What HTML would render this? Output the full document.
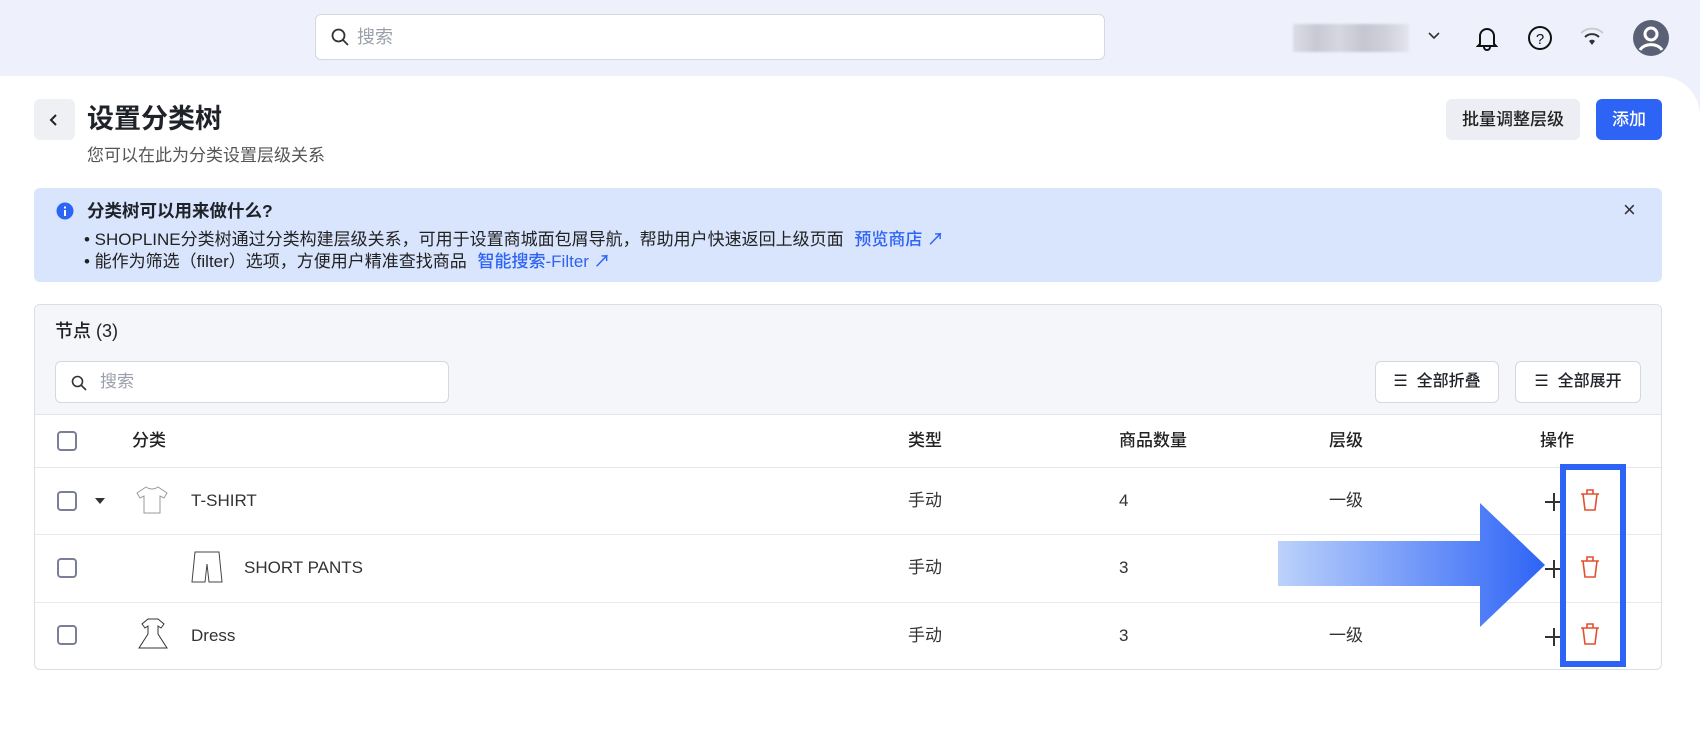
<!DOCTYPE html>
<html><head><meta charset="utf-8"><style>
*{box-sizing:border-box;margin:0;padding:0}
body{width:1700px;height:722px;background:#eef0fb;font-family:"Liberation Sans","Noto Sans CJK SC",sans-serif;color:#1f2329;position:relative;overflow:hidden}
.abs{position:absolute}
.main{position:absolute;left:0;top:76px;width:1700px;height:660px;background:#fff;border-top-right-radius:40px}
.btn{position:absolute;border-radius:6px;font-size:17px;display:flex;align-items:center;justify-content:center;font-weight:500;line-height:20px}
.cb{position:absolute;width:20px;height:20px;border:2px solid #7b7f95;border-radius:4px;left:56px}
.t{position:absolute;font-size:17px;color:#333;line-height:20px;height:20px;white-space:nowrap}
.row{position:absolute;left:0;width:1628px;border-top:1px solid #e8e9ee}
.ln{position:absolute;line-height:22px;white-space:nowrap}
</style></head><body>
<div class="abs" style="left:315px;top:14px;width:790px;height:46px;background:#fff;border:1px solid #d5d8e0;border-radius:6px"></div>
<svg class="abs" style="left:331px;top:28px" width="18" height="18" viewBox="0 0 18 18"><circle cx="7.5" cy="7.5" r="6" fill="none" stroke="#333" stroke-width="1.8"/><path d="M12 12l5 5" stroke="#333" stroke-width="1.8"/></svg>
<div class="ln" style="left:357px;top:26px;font-size:18px;color:#9aa0ab">搜索</div>
<div class="abs" style="left:1293px;top:24px;width:116px;height:28px;background:linear-gradient(90deg,#dcdde6,#c8c9d4 20%,#d6d7e0 40%,#c5c6d1 60%,#cfd0da 80%,#e4e5ee);filter:blur(1px)"></div>
<svg class="abs" style="left:1427px;top:31px" width="14" height="10"><path d="M2 2l5 5 5-5" fill="none" stroke="#333" stroke-width="1.6"/></svg>
<svg class="abs" style="left:1476px;top:25px" width="22" height="26" viewBox="0 0 22 26"><path d="M4 19V11a7 7 0 0114 0v8l2 2H2z M8 22a3 3 0 006 0" fill="none" stroke="#111" stroke-width="2"/></svg>
<svg class="abs" style="left:1527px;top:25px" width="26" height="26"><circle cx="13" cy="13" r="11" fill="none" stroke="#111" stroke-width="2"/><text x="13" y="19" text-anchor="middle" font-size="15" font-family="Liberation Sans" fill="#111">?</text></svg>
<svg class="abs" style="left:1579px;top:27px" width="26" height="20"><path d="M2 6a16 16 0 0122 0" fill="none" stroke="#ccc" stroke-width="2"/><path d="M6 10a10 10 0 0114 0" fill="none" stroke="#333" stroke-width="2"/><path d="M13 18l-3-4a4 4 0 016 0z" fill="#333"/></svg>
<svg class="abs" style="left:1632px;top:19px" width="38" height="38"><circle cx="19" cy="19" r="18" fill="#5a6176"/><circle cx="19" cy="15" r="6" fill="none" stroke="#fff" stroke-width="3"/><path d="M8 31a12 9 0 0122 0" fill="none" stroke="#fff" stroke-width="3"/></svg>
<div class="main"></div>
<div class="abs" style="left:34px;top:99px;width:41px;height:41px;background:#eef0f4;border-radius:6px"></div>
<svg class="abs" style="left:49px;top:113px" width="10" height="14"><path d="M7 2L2 7l5 5" fill="none" stroke="#222" stroke-width="2"/></svg>
<div class="ln" style="left:87px;top:103px;font-size:27px;line-height:32px;font-weight:bold">设置分类树</div>
<div class="ln" style="left:87px;top:145px;font-size:17px;color:#555">您可以在此为分类设置层级关系</div>
<div class="btn" style="left:1446px;top:99px;width:134px;height:41px;background:#eceef3;color:#222">批量调整层级</div>
<div class="btn" style="left:1596px;top:99px;width:66px;height:41px;background:#2e64f6;color:#fff">添加</div>
<div class="abs" style="left:34px;top:188px;width:1628px;height:94px;background:#d9e4fd;border-radius:6px"></div>
<svg class="abs" style="left:56px;top:202px" width="18" height="18"><circle cx="9" cy="9" r="8.5" fill="#2e64f6"/><rect x="8" y="8" width="2" height="6" fill="#fff"/><rect x="8" y="4.5" width="2" height="2" fill="#fff"/></svg>
<div class="ln" style="left:87px;top:200px;font-size:17.5px;font-weight:bold">分类树可以用来做什么?</div>
<div class="ln" style="left:1623px;top:199px;font-size:22px;color:#333">×</div>
<div class="ln" style="left:84px;top:229px;font-size:17px;color:#222">• SHOPLINE分类树通过分类构建层级关系，可用于设置商城面包屑导航，帮助用户快速返回上级页面 <span style="color:#2e64f6;font-weight:500;margin-left:6px">预览商店 ↗</span></div>
<div class="ln" style="left:84px;top:251px;font-size:17px;color:#222">• 能作为筛选（filter）选项，方便用户精准查找商品 <span style="color:#2e64f6;font-weight:500;margin-left:6px">智能搜索-Filter ↗</span></div>
<div class="abs" style="left:34px;top:304px;width:1628px;height:366px;border:1px solid #dcdee6;border-radius:6px;overflow:hidden">
 <div style="position:absolute;left:0;top:0;width:100%;height:110px;background:#f5f6fa;border-bottom:1px solid #e3e5ec"></div>
 <div class="t" style="left:20px;top:16px;font-size:18px;font-weight:500;color:#222">节点 (3)</div>
 <div style="position:absolute;left:20px;top:56px;width:394px;height:42px;background:#fff;border:1px solid #d5d8e0;border-radius:6px"></div>
 <svg style="position:absolute;left:36px;top:70px" width="16" height="16"><circle cx="6.5" cy="6.5" r="5" fill="none" stroke="#333" stroke-width="1.6"/><path d="M10 10l5 5" stroke="#333" stroke-width="1.6"/></svg>
 <div class="t" style="left:65px;top:67px;color:#9aa0ab">搜索</div>
 <div class="btn" style="left:1340px;top:56px;width:124px;height:42px;background:#fff;border:1px solid #d5d8e0;font-size:16px">☰&nbsp; 全部折叠</div>
 <div class="btn" style="left:1480px;top:56px;width:126px;height:42px;background:#fff;border:1px solid #d5d8e0;font-size:16px">☰&nbsp; 全部展开</div>
 <div class="cb" style="left:22px;top:126px"></div>
 <div class="t" style="left:97px;top:126px;font-weight:500;color:#222">分类</div>
 <div class="t" style="left:873px;top:126px;font-weight:500;color:#222">类型</div>
 <div class="t" style="left:1084px;top:126px;font-weight:500;color:#222">商品数量</div>
 <div class="t" style="left:1294px;top:126px;font-weight:500;color:#222">层级</div>
 <div class="t" style="left:1505px;top:126px;font-weight:500;color:#222">操作</div>
 <div class="row" style="top:162px"></div><div class="row" style="top:229px"></div><div class="row" style="top:297px"></div>
 <div class="cb" style="left:22px;top:186px"></div>
 <div style="position:absolute;left:60px;top:193px;border:5px solid transparent;border-top:6px solid #333"></div>
 <svg style="position:absolute;left:100px;top:180px" width="34" height="30"><path d="M11 2L2 8l3 5 4-2v17h16V11l4 2 3-5-9-6q-6 4-12 0z" fill="#fff" stroke="#999" stroke-width="1"/></svg>
 <div class="t" style="left:156px;top:186px">T-SHIRT</div>
 <div class="t" style="left:873px;top:186px">手动</div><div class="t" style="left:1084px;top:186px">4</div><div class="t" style="left:1294px;top:186px">一级</div>
 <div class="cb" style="left:22px;top:253px"></div>
 <svg style="position:absolute;left:154px;top:244px" width="36" height="36"><path d="M6 3h24l3 30H20l-2-18-2 18H3z" fill="#fff" stroke="#444" stroke-width="1"/></svg>
 <div class="t" style="left:209px;top:253px">SHORT PANTS</div>
 <div class="t" style="left:873px;top:253px">手动</div><div class="t" style="left:1084px;top:253px">3</div>
 <div class="cb" style="left:22px;top:320px"></div>
 <svg style="position:absolute;left:100px;top:312px" width="36" height="36"><path d="M13 2h10l6 5-3 4-3-2v8l9 14H4l9-14V9l-3 2-3-4z" fill="#fff" stroke="#333" stroke-width="1"/></svg>
 <div class="t" style="left:156px;top:321px">Dress</div>
 <div class="t" style="left:873px;top:321px">手动</div><div class="t" style="left:1084px;top:321px">3</div><div class="t" style="left:1294px;top:321px">一级</div>
 <svg style="position:absolute;left:1509px;top:187px" width="20" height="20"><path d="M10 1v18M1 10h18" stroke="#333" stroke-width="2"/></svg>
 <svg style="position:absolute;left:1509px;top:254px" width="20" height="20"><path d="M10 1v18M1 10h18" stroke="#333" stroke-width="2"/></svg>
 <svg style="position:absolute;left:1509px;top:322px" width="20" height="20"><path d="M10 1v18M1 10h18" stroke="#333" stroke-width="2"/></svg>
</div>
<svg class="abs" style="left:1278px;top:500px" width="270" height="130"><defs><linearGradient id="g" x1="0" x2="1"><stop offset="0" stop-color="#bcd2fb"/><stop offset="1" stop-color="#2e64f6"/></linearGradient></defs><path d="M0 41h202V3l65 62-65 62V86H0z" fill="url(#g)"/></svg>
<div class="abs" style="left:1560px;top:464px;width:66px;height:203px;border:6px solid #2e64f6"></div>
<svg class="abs" style="left:1580px;top:488px" width="20" height="24"><path d="M1 6h18M7 6V2h6v4M3 6l2 16h10l2-16" fill="none" stroke="#e2502f" stroke-width="1.6"/></svg>
<svg class="abs" style="left:1580px;top:555px" width="20" height="24"><path d="M1 6h18M7 6V2h6v4M3 6l2 16h10l2-16" fill="none" stroke="#e2502f" stroke-width="1.6"/></svg>
<svg class="abs" style="left:1580px;top:622px" width="20" height="24"><path d="M1 6h18M7 6V2h6v4M3 6l2 16h10l2-16" fill="none" stroke="#e2502f" stroke-width="1.6"/></svg>
</body></html>
